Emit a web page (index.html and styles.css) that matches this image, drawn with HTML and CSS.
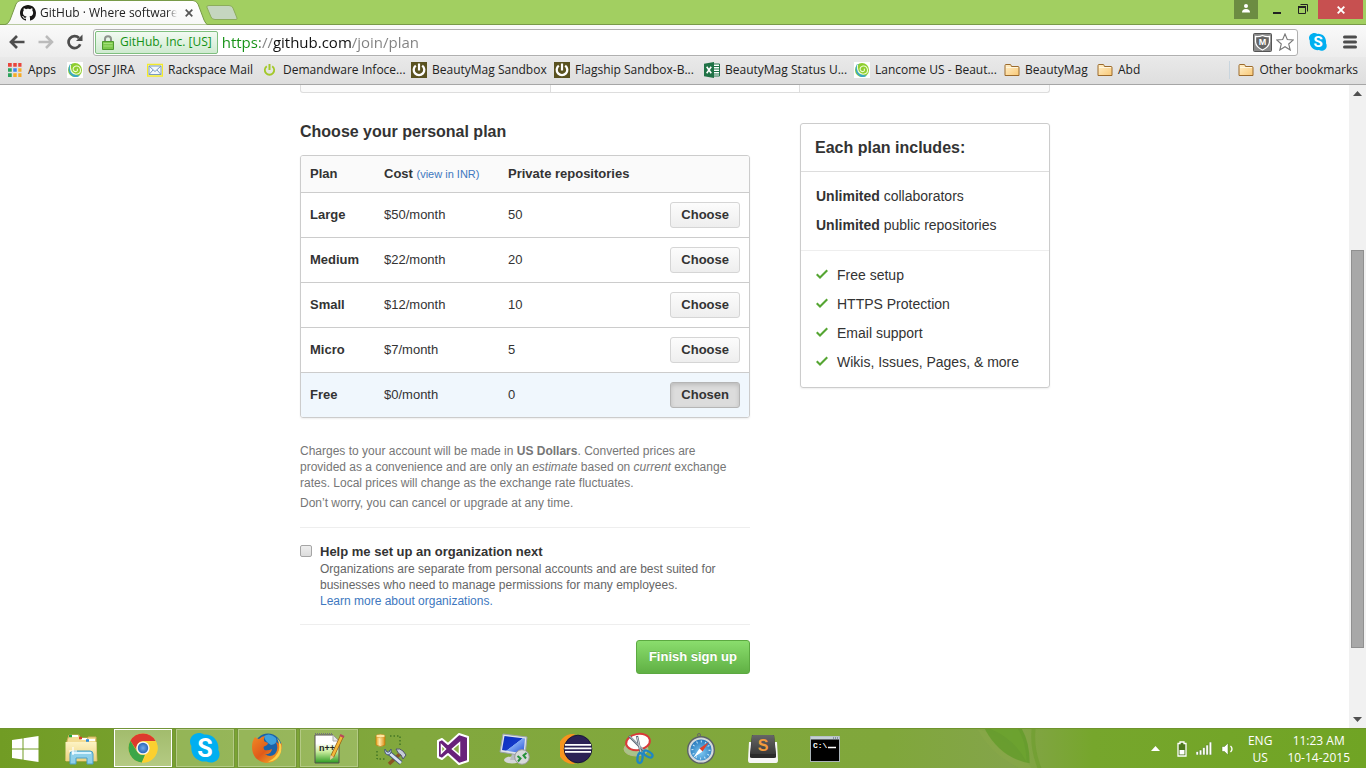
FILE: index.html
```html
<!DOCTYPE html>
<html lang="en">
<head>
<meta charset="utf-8">
<title>GitHub · Where software is built</title>
<link rel="stylesheet" href="styles.css">
</head>
<body>
<svg class="defs" aria-hidden="true">
  <defs>
    <linearGradient id="g-folder" x1="0" y1="0" x2="1" y2="1"><stop offset="0" stop-color="#fff0cc"/><stop offset="1" stop-color="#f9c875"/></linearGradient>
    <linearGradient id="g-tab" x1="0" y1="0" x2="0" y2="1"><stop offset="0" stop-color="#fff"/><stop offset="1" stop-color="#f7f7f7"/></linearGradient>
    <linearGradient id="g-screen" x1="0" y1="0" x2="1" y2="1"><stop offset="0" stop-color="#0b2fc0"/><stop offset=".5" stop-color="#1438c8"/><stop offset=".52" stop-color="#7fa6f2"/><stop offset="1" stop-color="#1d4bd6"/></linearGradient>
    <linearGradient id="g-npp" x1="0" y1="0" x2="0" y2="1"><stop offset=".3" stop-color="#fff"/><stop offset=".6" stop-color="#c8ec9c"/><stop offset="1" stop-color="#2b9a20"/></linearGradient>
    <linearGradient id="g-key" x1="0" y1="0" x2="0" y2="1"><stop offset="0" stop-color="#666"/><stop offset="1" stop-color="#3a3a3a"/></linearGradient>
    <linearGradient id="g-exp" x1="0" y1="0" x2="0" y2="1"><stop offset="0" stop-color="#fdf3c4"/><stop offset="1" stop-color="#eed27e"/></linearGradient>
    <linearGradient id="g-db" x1="0" y1="0" x2="1" y2="0"><stop offset="0" stop-color="#e9a21f"/><stop offset=".4" stop-color="#ffe9a8"/><stop offset="1" stop-color="#d98a12"/></linearGradient>
    <linearGradient id="g-fox" x1="0" y1="0" x2="1" y2="1"><stop offset="0" stop-color="#f08a24"/><stop offset=".5" stop-color="#e05a1a"/><stop offset="1" stop-color="#f6c02c"/></linearGradient>
    <radialGradient id="g-saf" cx=".5" cy=".6" r=".6"><stop offset="0" stop-color="#7cc8f2"/><stop offset="1" stop-color="#1467b0"/></radialGradient>
    <radialGradient id="g-blue"><stop offset="0" stop-color="#6fa8ea"/><stop offset="1" stop-color="#2a66b8"/></radialGradient>
    <symbol id="i-folder" viewBox="0 0 16 16"><path d="M1 13.500V3.500Q1 2.500 2 2.500H6Q7 2.500 7.200 3.500L7.500 4.500H14Q15 4.500 15 5.500V13.500Z" fill="url(#g-folder)" stroke="#9b6a2c"/><path d="M2 5.500H14" stroke="#fff6de"/></symbol>
    <symbol id="i-swirl" viewBox="0 0 16 16"><path d="M0 0H16V16H0Z" fill="#fff"/><circle cx="8" cy="8" r="7" fill="#8fce2e"/><path d="M3 2Q-1 10 6 14.500Q10 16 13 13.500Q8 13.500 5 10.500Q3 7.500 4.500 2Z" fill="#3aa7c4"/><path d="M3.500 2.500Q2.500 11.500 9 12.300Q14 12 13.500 7.500Q12.500 3.500 9 4Q5.500 5 6.300 8Q7.500 10.300 9.800 9.300Q11.200 8 10 6.700" fill="none" stroke="#eefbd4" stroke-width="1.100"/></symbol>
    <symbol id="i-power" viewBox="0 0 16 16"><path d="M0 0H16V16H0Z" fill="#5a5220"/><path d="M4.800 3.600A5.300 5.300 0 1 0 11.200 3.600" fill="none" stroke="#fff" stroke-width="2.300"/><path d="M8 1.500V8.500" stroke="#fff" stroke-width="2.200"/></symbol>
    <symbol id="i-check" viewBox="0 0 12 16"><path fill="#55a532" d="M12 5L4 13L0 9L1.500 7.500L4 10L10.500 3.500Z"/></symbol>
    <symbol id="i-skype" viewBox="0 0 30 30"><path d="M9 0C4 0 0 4 0 8.500C0 10.300.6 11.700 1.400 13C.3 22 7 29.500 16.500 28.500C22 31.500 29.500 28 29.500 21.500C29.500 19.500 29 18 28.300 17C29.500 8 23 .6 14 1.500C12.500.5 11 0 9 0Z" fill="#00aff0"/><text x="15" y="24" text-anchor="middle" class="skype-s">S</text></symbol>
  </defs>
</svg>

<header class="browser">
  <div class="titlebar">
    <div class="tab">
      <svg class="tab-shape" viewBox="0 0 204 25"><path d="M0 25Q4 24.500 6 20L12 4Q13.500 .5 17 .5H189Q192 .5 194 4L200 20Q202 24.500 204 25Z" fill="url(#g-tab)" stroke="#789a48"/></svg>
      <svg class="ico" viewBox="0 0 16 16"><path fill="#181616" d="M8 0C3.580 0 0 3.580 0 8c0 3.540 2.290 6.530 5.470 7.590.4.070.55-.17.55-.38 0-.19-.01-.82-.01-1.490-2.010.37-2.530-.49-2.690-.94-.09-.23-.48-.94-.82-1.130-.28-.15-.68-.52-.01-.53.63-.01 1.080.58 1.230.82.72 1.210 1.870.87 2.330.66.070-.52.28-.87.51-1.070-1.780-.2-3.640-.89-3.640-3.950 0-.87.31-1.590.82-2.150-.08-.2-.36-1.020.080-2.120 0 0 .67-.21 2.200.82.64-.18 1.320-.27 2-.27.68 0 1.360.090 2 .27 1.530-1.040 2.200-.82 2.200-.82.44 1.100.16 1.920.080 2.120.51.56.82 1.270.82 2.150 0 3.070-1.870 3.750-3.650 3.950.29.25.54.73.54 1.480 0 1.070-.01 1.930-.01 2.200 0 .21.15.46.55.38A8.013 8.013 0 0 0 16 8c0-4.420-3.580-8-8-8z"/></svg>
      <span class="tab-title">GitHub · Where software is built</span>
      <button class="plain" aria-label="Close tab"><svg width="8" height="8" viewBox="0 0 8 8"><path d="M.7 .7L7.300 7.300M7.300 .7L.7 7.300" stroke="#555" stroke-width="1.700"/></svg></button>
    </div>
    <button class="plain newtab" aria-label="New tab"><svg width="32" height="16" viewBox="0 0 32 16"><path d="M3 .5H23Q26 .5 27 3L31 13Q31.500 14.500 30 14.500H9Q6 14.500 5 12L.8 2Q.5 .5 3 .5Z" fill="#c5d6c0" stroke="#8cad5c"/></svg></button>
    <div class="winctl">
      <button class="plain user" aria-label="User"><svg width="10" height="9" viewBox="0 0 10 9"><circle cx="5" cy="2" r="2" fill="#fff"/><path d="M1 8.500Q1 5 5 5Q9 5 9 8.500Z" fill="#fff"/></svg></button>
      <button class="plain min" aria-label="Minimize"><svg width="10" height="12" viewBox="0 0 10 12"><path d="M1 9H9" stroke="#222" stroke-width="2"/></svg></button>
      <button class="plain max" aria-label="Restore"><svg width="11" height="11" viewBox="0 0 11 11"><path d="M.5 2.500H7.500V9.500H.5ZM2.500 .5H9.500V7.500" fill="none" stroke="#222"/><path d="M0 3H8" stroke="#222" stroke-width="2"/></svg></button>
      <button class="plain close" aria-label="Close"><svg width="8" height="8" viewBox="0 0 8 8"><path d="M.7 .7L7.300 7.300M7.300 .7L.7 7.300" stroke="#fff" stroke-width="1.900"/></svg></button>
    </div>
  </div>

  <div class="toolbar">
    <button class="plain" aria-label="Back"><svg width="16" height="14" viewBox="0 0 16 14"><path d="M15.500 7H2.500M8 1L2 7L8 13" fill="none" stroke="#4d4d4d" stroke-width="2.700"/></svg></button>
    <button class="plain" aria-label="Forward"><svg width="16" height="14" viewBox="0 0 16 14"><path d="M.5 7H13.500M8 1L14 7L8 13" fill="none" stroke="#bbb" stroke-width="2.500"/></svg></button>
    <button class="plain reload" aria-label="Reload"><svg width="16" height="16" viewBox="0 0 16 16"><path d="M13.200 10.200A6 6 0 1 1 12 4" fill="none" stroke="#4d4d4d" stroke-width="2.700"/><path d="M15.500 .5V7H9Z" fill="#4d4d4d"/></svg></button>
    <div class="omnibox">
      <button class="plain secure"><svg width="12" height="15" viewBox="0 0 12 15"><path d="M3 7V4Q3 1.200 6 1.200Q9 1.200 9 4V7" fill="none" stroke="#8d938c" stroke-width="2"/><path d="M.5 6.500H11.500V14.500H.5Z" fill="#7cc94c" stroke="#4f9a30"/><path d="M1.500 8.500H10.500M1.500 11H10.500" stroke="#a5e07c"/></svg>GitHub, Inc. [US]</button>
      <input class="url" type="text" aria-label="Address" value="https://github.com/join/plan">
      <button class="plain" aria-label="Site advisor"><svg width="19" height="19" viewBox="0 0 19 19"><rect x=".5" y=".5" width="18" height="18" rx="1" fill="#8a8a8a" stroke="#555"/><path d="M2.500 3.500Q6 4 9.500 2.500Q13 4 16.500 3.500V9Q16 14 9.500 17Q3 14 2.500 9Z" fill="#666" stroke="#fff" stroke-width="1.300"/><text x="9.500" y="12" text-anchor="middle" class="shield-m">M</text></svg></button>
      <button class="plain" aria-label="Bookmark this page"><svg width="18" height="18" viewBox="0 0 18 18"><path d="M9 1L11.300 6.500L17.300 7L12.700 11L14.200 17L9 13.700L3.800 17L5.300 11L.7 7L6.700 6.500Z" fill="#fff" stroke="#777" stroke-width="1.100"/></svg></button>
    </div>
    <button class="plain skype" aria-label="Skype"><svg width="18" height="18"><use href="#i-skype"/></svg></button>
    <button class="plain menu" aria-label="Menu"><svg width="14" height="14" viewBox="0 0 14 14"><path d="M1.500 2H12.500M1.500 7H12.500M1.500 12H12.500" stroke="#4d4d4d" stroke-width="3" stroke-linecap="round"/></svg></button>
  </div>

  <nav class="bookmarks" aria-label="Bookmarks">
    <a href="#"><svg class="ico" viewBox="0 0 16 16"><path d="M1 1h4v4h-4zM6 1h4v4h-4zM11 1h3.500v4h-3.500z" fill="#e8453c"/><path d="M1 6h4v4h-4zM1 11h4v4h-4z" fill="#2da35c"/><path d="M6 6h4v4h-4z" fill="#3c83f0"/><path d="M11 6h3.500v4h-3.500zM6 11h4v4h-4zM11 11h3.500v4h-3.500z" fill="#f6ac28"/><path d="M5.500 0V16M10.500 0V16M0 5.500H16M0 10.500H16" stroke="#e2e2e2" stroke-width="1.500"/></svg>Apps</a>
    <a href="#"><svg class="ico"><use href="#i-swirl"/></svg>OSF JIRA</a>
    <a href="#"><svg class="ico" viewBox="0 0 16 16"><path d="M.5 2.500H15.500V14H.5Z" fill="#f4f8fc" stroke="#f3ea2a" stroke-width="1.500"/><path d="M2 4H14V12.500H2ZM2 4L8 9.500L14 4M2 12.500L6 8M14 12.500L10 8" fill="none" stroke="#7a9ac0"/></svg>Rackspace Mail</a>
    <a href="#"><svg class="ico" viewBox="0 0 16 16"><path d="M4.800 4.200A4.700 4.700 0 1 0 10.200 4.200" fill="none" stroke="#a3c82a" stroke-width="1.800"/><path d="M7.500 2V8" stroke="#a3c82a" stroke-width="2"/></svg>Demandware Infoce...</a>
    <a href="#"><svg class="ico"><use href="#i-power"/></svg>BeautyMag Sandbox</a>
    <a href="#"><svg class="ico"><use href="#i-power"/></svg>Flagship Sandbox-B...</a>
    <a href="#"><svg class="ico" viewBox="0 0 16 16"><path d="M8 2H15.500V14H8Z" fill="#fff" stroke="#21744a"/><path d="M9 4.500H15M9 7H15M9 9.500H15M9 12H15" stroke="#21744a"/><path d="M0 1.800L10 0V16L0 14.200Z" fill="#1f7246"/><path d="M2.700 4.800L7.200 11.200M7.200 4.800L2.700 11.200" stroke="#fff" stroke-width="1.600"/></svg>BeautyMag Status U...</a>
    <a href="#"><svg class="ico"><use href="#i-swirl"/></svg>Lancome US - Beaut...</a>
    <a href="#"><svg class="ico"><use href="#i-folder"/></svg>BeautyMag</a>
    <a href="#"><svg class="ico"><use href="#i-folder"/></svg>Abd</a>
    <a href="#" class="other"><svg class="ico"><use href="#i-folder"/></svg>Other bookmarks</a>
  </nav>
</header>

<div class="viewport">
  <div class="page">
    <div class="steps"><span></span><span class="current"></span><span></span></div>
    <div class="columns">
      <main class="plans">
        <h2>Choose your personal plan</h2>
        <div class="table-box">
          <table>
            <thead><tr><th class="c-plan">Plan</th><th class="c-cost">Cost <a href="#">(view in INR)</a></th><th>Private repositories</th><th class="c-act"></th></tr></thead>
            <tbody>
              <tr><th>Large</th><td>$50/month</td><td>50</td><td><button class="btn">Choose</button></td></tr>
              <tr><th>Medium</th><td>$22/month</td><td>20</td><td><button class="btn">Choose</button></td></tr>
              <tr><th>Small</th><td>$12/month</td><td>10</td><td><button class="btn">Choose</button></td></tr>
              <tr><th>Micro</th><td>$7/month</td><td>5</td><td><button class="btn">Choose</button></td></tr>
              <tr class="selected"><th>Free</th><td>$0/month</td><td>0</td><td><button class="btn chosen">Chosen</button></td></tr>
            </tbody>
          </table>
        </div>
        <div class="note">
          <p>Charges to your account will be made in <strong>US Dollars</strong>. Converted prices are provided as a convenience and are only an <em>estimate</em> based on <em>current</em> exchange rates. Local prices will change as the exchange rate fluctuates.</p>
          <p>Don’t worry, you can cancel or upgrade at any time.</p>
        </div>
        <div class="org">
          <input type="checkbox" id="org">
          <div>
            <label for="org">Help me set up an organization next</label>
            <p>Organizations are separate from personal accounts and are best suited for businesses who need to manage permissions for many employees.<br><a href="#">Learn more about organizations.</a></p>
          </div>
        </div>
        <div class="actions"><button class="btn-primary">Finish sign up</button></div>
      </main>
      <aside class="includes">
        <h2>Each plan includes:</h2>
        <ul>
          <li><span><strong>Unlimited</strong> collaborators</span></li>
          <li><span><strong>Unlimited</strong> public repositories</span></li>
        </ul>
        <ul>
          <li><svg width="12" height="16"><use href="#i-check"/></svg>Free setup</li>
          <li><svg width="12" height="16"><use href="#i-check"/></svg>HTTPS Protection</li>
          <li><svg width="12" height="16"><use href="#i-check"/></svg>Email support</li>
          <li><svg width="12" height="16"><use href="#i-check"/></svg>Wikis, Issues, Pages, &amp; more</li>
        </ul>
      </aside>
    </div>
  </div>
  <div class="scrollbar">
    <button class="plain" aria-label="Scroll up"><svg width="9" height="5" viewBox="0 0 9 5"><path d="M4.500 0L9 5H0Z" fill="#505050"/></svg></button>
    <div class="track"><div class="thumb"></div></div>
    <button class="plain" aria-label="Scroll down"><svg width="9" height="5" viewBox="0 0 9 5"><path d="M4.500 5L9 0H0Z" fill="#505050"/></svg></button>
  </div>
</div>

<footer class="taskbar">
  <button class="plain start" aria-label="Start"><svg width="28" height="26" viewBox="0 0 28 26"><path d="M1 4L11.500 2.500V12.500H1ZM12.500 2.300L27.500 0V12.500H12.500ZM1 13.500H11.500V23.500L1 22ZM12.500 13.500H27.500V26L12.500 23.700Z" fill="#fff"/></svg></button>
  <button class="plain task" aria-label="File Explorer"><svg width="34" height="32" viewBox="0 0 34 32"><path d="M3 8L5 2H15L16 5H24V4H32V10L33 28H2Z" fill="#f3dc93" stroke="#cfae5c"/><path d="M5 3H14M17 6H23M24 7H31" stroke="#fff" stroke-width="2"/><path d="M5 3H8" stroke="#22a83c" stroke-width="2.500"/><path d="M15 5H18" stroke="#d8402a" stroke-width="2.500"/><path d="M22 7.500H25" stroke="#2a8ad8" stroke-width="2.500"/><path d="M1.500 9H32.500V28H1.500Z" fill="url(#g-exp)"/><path d="M6 31V21Q6 18 9 18H26Q29 18 29 21V31H23V25H12V31Z" fill="#8fd0ea" stroke="#4b9fc4"/><path d="M8 20H27" stroke="#d8f4ff" stroke-width="2"/><path d="M9 14V22M5 18H13" stroke="#fff" stroke-width="1.200"/></svg></button>
  <button class="plain task open active" aria-label="Chrome"><svg width="30" height="30" viewBox="0 0 30 30"><circle cx="15" cy="15" r="14.500" fill="#ffd43a"/><path d="M2.400 7.800A14.500 14.500 0 0 1 27.600 8H15A7 7 0 0 0 8.500 17Z" fill="#dd3a2e"/><path d="M2.400 7.800L9 18.500A7 7 0 0 0 17 21.700L13.800 29.500A14.500 14.500 0 0 1 2.400 7.800Z" fill="#3ba648"/><path d="M15 8.500H28A14.500 14.500 0 0 1 13.800 29.500L20.500 19Z" fill="#fbd02f"/><circle cx="15" cy="15" r="6.600" fill="#f4f4f4"/><circle cx="15" cy="15" r="5.200" fill="url(#g-blue)"/></svg></button>
  <button class="plain task open" aria-label="Skype"><svg width="30" height="30"><use href="#i-skype"/></svg></button>
  <button class="plain task open" aria-label="Firefox"><svg width="32" height="32" viewBox="0 0 32 32"><circle cx="17" cy="15" r="13.500" fill="#1b62a8"/><path d="M13 4Q19 0 25 6Q27 12 20 13Q14 10 13 4Z" fill="#3fa0dc"/><path d="M4 5Q6 7 8 7Q11 4 14 4Q12 7 13.500 9.500L17 11Q17 13 13 14.500Q12 16 13.500 18Q17 19 21 17Q20 23 14 22Q19 26 24 22Q28 17 25 10Q31 14 30.500 10Q32 19 27 26Q20 33 11 30Q1 26 1 15Q1 9 4 5Z" fill="url(#g-fox)"/><path d="M26 6Q32 12 30 20Q27 29 17 30Q26 25 28 18Q29 12 26 6Z" fill="#fbd24a"/></svg></button>
  <button class="plain task open" aria-label="Notepad++"><svg width="32" height="34" viewBox="0 0 32 34"><path d="M2 4H20L26 10V32H2Z" fill="url(#g-npp)" stroke="#54504c"/><path d="M20 4V10H26" fill="#e8e8e8" stroke="#aaa"/><path d="M2 3H20" stroke="#777" stroke-width="2" stroke-dasharray="1 1"/><text x="6" y="20" class="npp">n++</text><path d="M29 5L19 26" stroke="#9a5a10" stroke-width="4"/><path d="M29 5L19.500 25" stroke="#f4b83a" stroke-width="2.600"/><path d="M29.500 4L28.500 6" stroke="#b8485a" stroke-width="4.500"/><path d="M17.500 24L17 29L21 26Z" fill="#e8cf9c"/></svg></button>
  <button class="plain task" aria-label="Database tools"><svg width="32" height="34" viewBox="0 0 32 34"><path d="M1 4V13Q5.500 16 10 13V4Z" fill="url(#g-db)" stroke="#b9720c" stroke-width=".6"/><ellipse cx="5.500" cy="4" rx="4.500" ry="1.800" fill="#ffe7a0" stroke="#c78618" stroke-width=".5"/><path d="M15 4H25V14M2 19V27H10" fill="none" stroke="#245f18" stroke-dasharray="1.500 2"/><path d="M27 20L14 32" stroke="#8a5422" stroke-width="3.500"/><path d="M21 17Q25 16 28 19L31 23L28 27L26 23Q23 22 21 17Z" fill="#c6ccd8" stroke="#4e5668"/><path d="M13 20L26 31" stroke="#465878" stroke-width="4.500"/><path d="M13 20L26 31" stroke="#d8e2f2" stroke-width="2.800"/><path d="M10 17Q9 22 13 23Q17 22 16 17L14 20L12 20Z" fill="#c6d4ea" stroke="#465878"/></svg></button>
  <button class="plain task" aria-label="Visual Studio"><svg width="34" height="32" viewBox="0 0 34 32"><path d="M23 1L32 4V28L23 31L12 21L6 26L2 24V8L6 6L12 11Z" fill="#68217a" stroke="#fff" stroke-width="2" stroke-linejoin="round"/><path d="M23.500 10V22L16.500 16ZM5.500 12V20L9.500 16Z" fill="#8aae48" stroke="#fff" stroke-width="1.500"/></svg></button>
  <button class="plain task" aria-label="Remote Desktop"><svg width="32" height="34" viewBox="0 0 32 34"><ellipse cx="13" cy="28" rx="8" ry="3.500" fill="#d4d6d8"/><path d="M13 22H19V28H11Z" fill="#b7bcc2"/><path d="M4 2L28 5L26 24L1 20Z" fill="#dfe3e8" stroke="#9aa2ac"/><path d="M5.500 4L26 6.500L24.500 21.500L3 18Z" fill="url(#g-screen)"/><circle cx="23" cy="25" r="7.300" fill="#d7d9da" stroke="#999"/><path d="M18.500 24L21.500 26.500L19 29.500M27.500 21L24.500 23.500L27 26.500" fill="none" stroke="#26913a" stroke-width="2"/></svg></button>
  <button class="plain task" aria-label="Eclipse"><svg width="34" height="32" viewBox="0 0 34 32"><path d="M13 2A14 14 0 0 0 13 30Q3 16 13 2Z" fill="#f7941e" stroke="#f7941e" stroke-width="2"/><circle cx="18" cy="16" r="13.800" fill="#2c2255" stroke="#19143a"/><path d="M5 11.800H31M4.500 15.300H31.500M5 18.800H31" stroke="#fff" stroke-width="1.700"/></svg></button>
  <button class="plain task" aria-label="Snipping Tool"><svg width="32" height="34" viewBox="0 0 32 34"><ellipse cx="13" cy="17" rx="12" ry="7" fill="#a9c48a" stroke="#b8b890"/><ellipse cx="15" cy="10" rx="12" ry="8" transform="rotate(-10 15 10)" fill="#fff" stroke="#d93a3a" stroke-width="2"/><path d="M6 4L22 20M14 4L18 22" stroke="#5b6775" stroke-width="2.300"/><path d="M6.500 4L22 19.500M14.200 5L18 21" stroke="#cdd4db"/><ellipse cx="17" cy="26" rx="2.500" ry="5" transform="rotate(8 17 26)" fill="none" stroke="#1f87c4" stroke-width="2.300"/><ellipse cx="25" cy="22" rx="2.500" ry="5" transform="rotate(-58 25 22)" fill="none" stroke="#1f87c4" stroke-width="2.300"/></svg></button>
  <button class="plain task" aria-label="Safari"><svg width="30" height="32" viewBox="0 0 30 32"><circle cx="13" cy="2" r="1.500" fill="none" stroke="#666"/><circle cx="15" cy="17" r="13" fill="url(#g-saf)" stroke="#5c6268" stroke-width="2"/><circle cx="15" cy="17" r="11.600" fill="none" stroke="#d4d9dc" stroke-width="2"/><circle cx="15" cy="17" r="8.500" fill="none" stroke="#c8eafc" stroke-width="2" stroke-dasharray="1 3.400"/><path d="M23 9L16.500 18.500L13.500 15.500Z" fill="#e2402a"/><path d="M7 25L13.500 15.500L16.500 18.500Z" fill="#fff"/></svg></button>
  <button class="plain task" aria-label="Sublime Text"><svg width="32" height="30" viewBox="0 0 32 30"><path d="M2 8L1 26Q1 29 3 29H29Q31 29 31 26L30 8Z" fill="#f6f6f6"/><path d="M5 1H27L29 20V23Q29 24 27 24H5Q3 24 3 23V20Z" fill="#2b2b2b"/><path d="M6 1H26Q27 1 27.200 2L28.500 20H3.500L5 2Q5 1 6 1Z" fill="url(#g-key)"/><text x="16" y="17" text-anchor="middle" class="subl">S</text></svg></button>
  <button class="plain task" aria-label="Command Prompt"><svg width="30" height="26" viewBox="0 0 30 26"><rect x=".5" y=".5" width="29" height="25" fill="#000" stroke="#aab4b8"/><path d="M1 2H29" stroke="#c4cfd6" stroke-width="3"/><path d="M23 2H28" stroke="#456" stroke-dasharray="1 1"/><text x="3" y="12" class="cmd">C:\</text><path d="M18 11.500H26" stroke="#fff" stroke-width="1.500"/></svg></button>
  <svg class="leaf" width="84" height="40" viewBox="0 0 84 40"><path d="M0 0Q28 6 56 40H44Q16 28 0 0Z" fill="#8cab48" opacity=".4"/><path d="M8 0Q24 30 54 35Q54 14 46 0Z" fill="#5d9a25" opacity=".7"/><path d="M14 0Q38 10 51 34Q50 12 42 0Z" fill="#6fa530" opacity=".6"/><path d="M56 0Q54 20 62 40H66Q58 20 60 0Z" fill="#679c28" opacity=".5"/></svg>
  <div class="tray">
    <button class="plain" aria-label="Show hidden icons"><svg width="9" height="5" viewBox="0 0 9 5"><path d="M4.500 0L9 5H0Z" fill="#fff"/></svg></button>
    <svg width="10" height="16" viewBox="0 0 10 16"><path d="M3 1H7V2.500H9V15H1V2.500H3Z" fill="#4d781c" stroke="#fff" stroke-width="1.300"/><path d="M2.500 9H7.500V13.500H2.500Z" fill="#fff"/></svg>
    <svg width="16" height="13" viewBox="0 0 16 13"><path d="M0 9.500H2.500V13H0ZM3.300 8H5.800V13H3.300ZM6.600 5.500H9.100V13H6.600ZM9.900 3H12.400V13H9.900ZM13.200 0H15.700V13H13.200Z" fill="#fff" stroke="#4f7a1e" stroke-width=".5"/></svg>
    <svg width="13" height="14" viewBox="0 0 13 14"><path d="M1 4.500H3.500L7 1V13L3.500 9.500H1Z" fill="#fff" stroke="#4f7a1e" stroke-width=".5"/><path d="M9.500 4Q12.500 7 9.500 10" fill="none" stroke="#fff" stroke-width="1.300"/></svg>
    <div class="lang">ENG<br>US</div>
    <div class="clock">11:23 AM<br>10-14-2015</div>
  </div>
</footer>
</body>
</html>
```
FILE: styles.css
```css
* { box-sizing: border-box; }
body {
  margin: 0;
  height: 100vh;
  display: flex;
  flex-direction: column;
  overflow: hidden;
  background: #fff;
  color: #333;
  font: 13px/18px "Liberation Sans", Arial, sans-serif;
}
h2, p, ul { margin: 0; padding: 0; }
a { color: #4078c0; text-decoration: none; }
svg { display: block; flex: none; }
.defs { position: absolute; width: 0; height: 0; }
.plain { border: 0; padding: 0; margin: 0; background: none; font: inherit; color: inherit; display: flex; align-items: center; justify-content: center; flex: none; }
.ico { width: 16px; height: 16px; }

/* Browser frame */
.browser { flex: none; font-family: "Open Sans", "Noto Sans", sans-serif; font-size: 12px; color: #222; border-bottom: 1px solid #a6a6a6; }
.titlebar { height: 25px; display: flex; background: #a2cf61; border-bottom: 1px solid #789a48; }
.tab { position: relative; display: flex; align-items: center; gap: 4px; width: 204px; height: 25px; margin-left: 4px; padding: 1px 11px 0 16px; flex: none; }
.tab > * { position: relative; }
.tab .tab-shape { position: absolute; left: 0; top: 0; width: 204px; height: 25px; }
.tab-title { flex: 1; min-width: 0; overflow: hidden; white-space: nowrap; -webkit-mask-image: linear-gradient(to right, #000 calc(100% - 10px), transparent); mask-image: linear-gradient(to right, #000 calc(100% - 10px), transparent); }
.tab .plain { width: 16px; }
.newtab { align-self: flex-start; height: 25px; margin-left: -2px; }
.winctl { display: flex; margin-left: auto; padding-right: 3px; height: 19px; }
.user { width: 24px; background: #6c8c42; margin-right: 7px; align-items: flex-start; padding-top: 4px; }
.min { width: 24px; }
.max { width: 29px; }
.close { width: 45px; background: #c75050; }

.toolbar { height: 32px; display: flex; align-items: center; gap: 13px; padding: 2px 9px 0 9px; background: linear-gradient(#fafafa, #ededed); }
.reload { margin-right: -3px; }
.omnibox { flex: 1; height: 27px; display: flex; align-items: center; gap: 4px; padding: 0 3px 0 1px; background: #fff; border: 1px solid #b0b0b0; border-radius: 3px; }
.secure { height: 23px; gap: 6px; padding: 0 5px 0 6px; color: #149114; border: 1px solid #7fbf7f; border-radius: 2px; background: linear-gradient(#f2faf2, #cfead0); }
.url { flex: 1; min-width: 0; border: 0; padding: 0; outline: 0; font: 15px/22px "Open Sans", "Noto Sans", sans-serif; color: transparent; background: linear-gradient(to right, #149114 0 38px, #808080 38px 51px, #111 51px 129px, #808080 129px); -webkit-background-clip: text; background-clip: text; }
.skype { margin-left: -2px; }
.menu { margin-left: 3px; margin-right: 0; }

.bookmarks { height: 27px; display: grid; grid-template-columns: 60px 80px 115px 149px 143px 150px 150px 150px 93px 60px 1fr; align-items: center; padding: 0 8px 2px 7px; background: linear-gradient(#e9e9e9, #dedede); }
.bookmarks a { display: flex; align-items: center; gap: 5px; color: #222; white-space: nowrap; }
.bookmarks .other { justify-self: end; padding-left: 8px; border-left: 1px solid #c9d5de; }

/* Page */
.viewport { flex: 1; min-height: 0; display: flex; }
.page { flex: 1; overflow: hidden; padding-left: 1px; }
.steps, .columns { width: 750px; max-width: 100%; margin: 0 auto; }
.steps { height: 8px; display: grid; grid-template-columns: 1fr 1fr 1fr; border: 1px solid #ddd; border-top: 0; border-radius: 0 0 3px 3px; background: #fafafa; }
.steps .current { background: #fff; border: solid #ddd; border-width: 0 1px; }
.columns { display: flex; justify-content: space-between; align-items: flex-start; padding-top: 30px; }
.plans { width: 60%; }
h2 { font-size: 16px; line-height: 18px; font-weight: bold; }
.table-box { margin-top: 14px; border: 1px solid #ccc; border-radius: 3px; overflow: hidden; box-shadow: 0 1px 2px rgba(0, 0, 0, .07); }
table { width: 100%; border-collapse: separate; border-spacing: 0; table-layout: fixed; }
th, td { height: 45px; padding: 0 9px; text-align: left; border-bottom: 1px solid #ccc; }
thead th { height: 37px; background: #fafafa; }
tbody tr:last-child > * { border-bottom: 0; height: 44px; }
td:last-child { text-align: right; }
.c-plan { width: 74px; }
.c-cost { width: 124px; }
.c-act { width: 90px; }
th a { font-size: 11px; font-weight: normal; }
.selected > * { background: #f0f7fd; }
.btn { height: 26px; padding: 0 10px; font: bold 13px/18px "Liberation Sans", Arial, sans-serif; color: #333; border: 1px solid #d5d5d5; border-radius: 3px; background: linear-gradient(#fcfcfc, #eee); vertical-align: middle; }
.btn.chosen { background: #dcdcdc; border-color: #b5b5b5; box-shadow: inset 0 2px 4px rgba(0, 0, 0, .15); }
.note { margin-top: 25px; padding: 0 10px 16px 0; font-size: 12px; line-height: 16px; color: #767676; border-bottom: 1px solid #eee; }
.note p + p { margin-top: 4px; }
.org { display: flex; gap: 8px; padding: 15px 0; border-bottom: 1px solid #eee; }
.org input { appearance: none; width: 12px; height: 12px; margin: 2px 0 0; border: 1px solid #a5a5a5; border-radius: 2px; background: linear-gradient(#eee, #dcdcdc); flex: none; }
.org label { display: block; font-weight: bold; line-height: 18px; }
.org p { font-size: 12px; line-height: 16px; color: #666; }
.actions { display: flex; justify-content: flex-end; padding-top: 15px; }
.btn-primary { height: 34px; padding: 0 12px; font: bold 13px/18px "Liberation Sans", Arial, sans-serif; color: #fff; text-shadow: 0 -1px 0 rgba(0, 0, 0, .15); border: 1px solid #5ca941; border-radius: 3px; background: linear-gradient(#8add6d, #60b044); }

.includes { width: 250px; border: 1px solid #ccc; border-radius: 3px; box-shadow: 0 1px 2px rgba(0, 0, 0, .07); font-size: 14px; line-height: 19px; }
.includes h2 { padding: 15px 14px 14px; }
.includes ul { list-style: none; display: grid; gap: 10px; padding: 15px; border-top: 1px solid #ddd; }
.includes ul + ul { border-color: #eee; }
.includes li { display: flex; align-items: flex-start; gap: 9px; }

.scrollbar { width: 17px; flex: none; display: flex; flex-direction: column; background: #f1f1f1; }
.scrollbar .plain { height: 17px; }
.track { flex: 1; display: flex; flex-direction: column; }
.track::before { content: ""; flex: 148; }
.track::after { content: ""; flex: 63; }
.thumb { flex: 398; margin: 0 2px; background: #a8a8a8; border: 1px solid #909090; }

/* Taskbar */
.taskbar { height: 40px; flex: none; display: flex; align-items: stretch; gap: 4px; font: 12px/17px "Open Sans", "Noto Sans", sans-serif; color: #fff; border-top: 1px solid #6f942d; background: linear-gradient(to right, #719c24, #82a83e 30%, #80a73b 65%, #84a44a 74%, #76a62c 80%, #70a424); }
.start { width: 48px; padding-left: 2px; }
.task { width: 58px; }
.open { margin: 0 0 1px; border: 1px solid #b4ca85; background: rgba(200, 218, 160, .35); outline: 1px solid #739538; outline-offset: 0; }
.open.active { border-color: #fff; background: linear-gradient(#a2bc6d, #b4ca83); }
.leaf { margin-left: 118px; height: 39px; }
.tray { display: flex; align-items: center; gap: 9px; margin-left: auto; padding-right: 16px; text-align: center; }
.tray .plain { margin-right: 8px; }
.lang { margin-left: 5px; }
.clock { margin-left: 6px; }

/* Lettering in icons */
.skype-s { font: bold 25px Roboto, sans-serif; fill: #fff; }
.shield-m { font: bold 9px "Liberation Sans", sans-serif; fill: #fff; }
.npp { font: bold 9px "Liberation Sans", sans-serif; fill: #222; }
.subl { font: bold 16px "Liberation Sans", sans-serif; fill: #f29a3c; }
.cmd { font: bold 8px "Liberation Mono", monospace; fill: #fff; }
```
